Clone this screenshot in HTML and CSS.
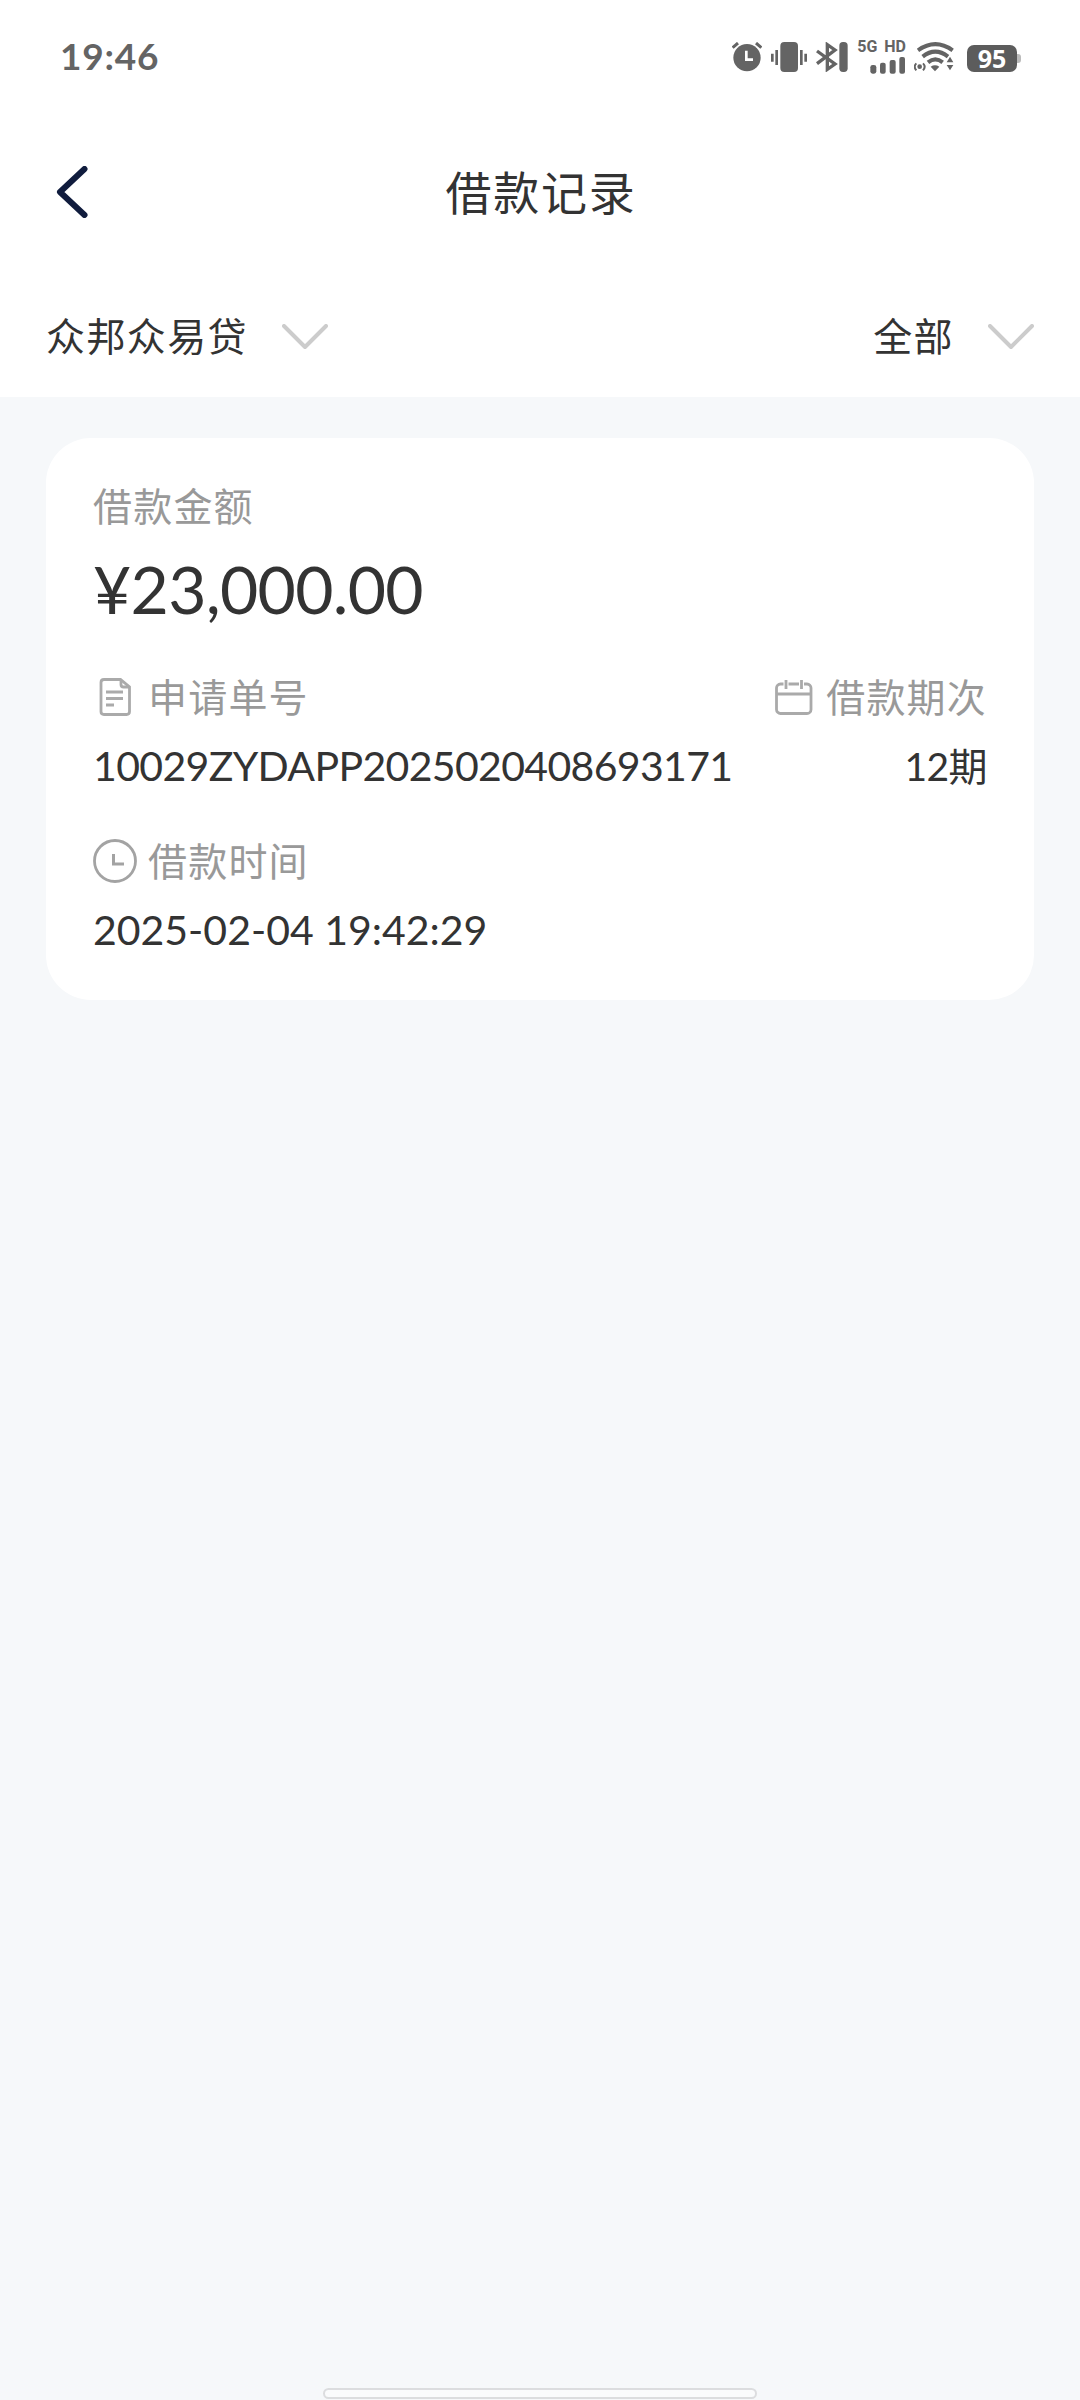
FILE: index.html
```html
<!DOCTYPE html>
<html lang="zh-CN">
<head>
  <meta charset="UTF-8" />
  <title>借款记录</title>
  <link rel="stylesheet" href="styles.css">
</head>
<body>

<header class="top">
  <div class="status">
    <span class="time">19:46</span>
    <div class="status-icons">
      <!-- Alarm -->
      <svg class="alarm" width="30" height="30" viewBox="0 0 90 90">
        <circle cx="45" cy="47" r="41" fill="#646464" />
        <path d="M2 17 18 3M88 17 72 3" stroke="#646464" stroke-width="9" />
        <path d="M43 26v27h20" fill="none" stroke="#fff" stroke-width="8" />
      </svg>
      <!-- Vibrate -->
      <svg class="vibrate" width="36" height="30" viewBox="0 0 108 90">
        <rect x="28" y="0" width="53" height="90" rx="12" fill="#646464" />
        <path d="M4 35v24M17 24v45M91 24v45M104 35v24" stroke="#646464" stroke-width="8" />
      </svg>
      <!-- Bluetooth -->
      <svg class="bluetooth" width="32" height="30" viewBox="0 0 96 90">
        <path d="M3 27 57 66 34 82V8L57 24 3 65" fill="none" stroke="#646464" stroke-width="10" />
        <rect x="70" y="0" width="25" height="90" rx="11" fill="#646464" />
      </svg>
      <div class="signal">
        <span>5G HD</span>
        <svg width="36" height="17" viewBox="0 0 108 51">
          <g fill="#646464">
            <rect x="1" y="24" width="18" height="26" rx="7" />
            <rect x="30" y="17" width="17" height="33" rx="6" />
            <rect x="59" y="9" width="18" height="41" rx="6" />
            <rect x="88" y="0" width="17" height="50" rx="6" />
          </g>
        </svg>
      </div>
      <!-- Wifi -->
      <svg class="wifi" width="40" height="30" viewBox="0 0 120 90">
        <g fill="none" stroke="#646464" stroke-width="12">
          <path d="M12 25Q64-12 116 25" />
          <path d="M26 44Q64 14 102 44" />
          <path d="M42 61Q64 43 86 61" />
        </g>
        <path d="M50 74Q63 66 76 74L63 88zM98 61 108 44 118 61zM98 69h20L108 85z" fill="#646464" />
        <circle cx="17" cy="74" r="7" fill="#646464" />
        <path d="M7 64Q-3 74 7 85M27 64Q37 74 27 85" fill="none" stroke="#646464" stroke-width="6" />
      </svg>
      <div class="battery">95</div>
    </div>
  </div>

  <div class="nav">
    <svg class="back" width="32" height="52" viewBox="0 0 32 52">
      <path d="M28.500 3 4 26 28.500 49" fill="none" stroke="#101c3d" stroke-width="6" stroke-linecap="round" stroke-linejoin="round" />
    </svg>
    <h1>借款记录</h1>
  </div>

  <div class="filters">
    <div class="filter">
      <span>众邦众易贷</span>
      <svg width="46" height="26" viewBox="0 0 46 26">
        <path d="M2 2 23 23 44 2" fill="none" stroke="#ccc" stroke-width="4" stroke-linecap="round" stroke-linejoin="round" />
      </svg>
    </div>
    <div class="filter">
      <span>全部</span>
      <svg width="46" height="26" viewBox="0 0 46 26">
        <path d="M2 2 23 23 44 2" fill="none" stroke="#ccc" stroke-width="4" stroke-linecap="round" stroke-linejoin="round" />
      </svg>
    </div>
  </div>
</header>

<main>
  <section class="card">
    <div class="label"><span>借款金额</span></div>
    <div class="amount">¥23,000.00</div>
    <div class="row">
      <div class="item">
        <div class="label">
          <svg width="44" height="44" viewBox="0 0 44 44">
            <g fill="none" stroke="#aaa" stroke-width="2.800">
              <path d="M27.500 4.500H11q-3 0-3 3v29q0 3 3 3h22.500q3 0 3-3V12z" />
              <path d="M28 5v4.500q0 2.500 2.500 2.500H36M13 17h17M13 23.500h17M13 30h8" />
            </g>
          </svg>
          <span>申请单号</span>
        </div>
        <div class="value order">10029ZYDAPP2025020408693171</div>
      </div>
      <div class="item right">
        <div class="label">
          <svg width="44" height="44" viewBox="0 0 44 44">
            <g fill="none" stroke="#aaa" stroke-width="2.800">
              <rect x="5.500" y="9" width="34.500" height="29.500" rx="4" />
              <path d="M5.500 19H40" />
              <path d="M15 5v9M30.500 5v9" stroke="#fff" stroke-width="5" />
              <path d="M15 5v9M30.500 5v9" />
            </g>
          </svg>
          <span>借款期次</span>
        </div>
        <div class="value">12期</div>
      </div>
    </div>
    <div class="item">
      <div class="label">
        <svg width="44" height="44" viewBox="0 0 44 44">
          <circle cx="22" cy="22" r="20.500" fill="none" stroke="#a3a3a3" stroke-width="2.800" />
          <path d="M20.500 15v10H31" fill="none" stroke="#a3a3a3" stroke-width="3" />
        </svg>
        <span>借款时间</span>
      </div>
      <div class="value date">2025-02-04 19:42:29</div>
    </div>
  </section>
</main>

<div class="home-bar"></div>

</body>
</html>
```
FILE: styles.css
```css
* {
  box-sizing: border-box;
}

body {
  margin: 0;
  height: 2400px;
  display: flex;
  flex-direction: column;
  background: #f6f8fa;
  color: #333;
  font-family: Lato, "Noto Sans CJK SC", sans-serif;
}

svg {
  display: block;
  flex: none;
}

.top {
  height: 397px;
  background: #fff;
}

.status {
  height: 114px;
  padding: 0 60px;
  display: flex;
  justify-content: space-between;
  align-items: center;
}

.time {
  padding-bottom: 3px;
  color: #646464;
  font-size: 37px;
  font-weight: bold;
  letter-spacing: 0.8px;
}

.status-icons {
  display: flex;
  align-items: center;
  color: #646464;
}

.vibrate {
  margin-left: 9px;
}

.bluetooth {
  margin-left: 9px;
}

.signal {
  width: 50px;
  height: 34px;
  margin-left: 8px;
  display: flex;
  flex-direction: column;
  justify-content: space-between;
  align-items: flex-end;
  font: bold 16px/14px Roboto, sans-serif;
  word-spacing: 3px;
  white-space: nowrap;
}

.wifi {
  margin-left: 8px;
}

.battery {
  position: relative;
  width: 50px;
  height: 27px;
  margin: 2px 3px 0 13px;
  border-radius: 7px;
  background: #5c5c5c;
  color: #fff;
  font: bold 25px/27px "Open Sans", sans-serif;
  text-align: center;
}

.battery::after {
  content: "";
  position: absolute;
  left: 50px;
  top: 9px;
  width: 4px;
  height: 9px;
  border-radius: 0 3px 3px 0;
  background: #bbb;
}

.nav {
  height: 156px;
  padding: 0 56px;
  display: grid;
  grid-template-columns: 32px 1fr 32px;
  align-items: center;
}

h1 {
  margin: 0;
  padding: 2px 0 0 2px;
  font-size: 46px;
  font-weight: normal;
  line-height: 60px;
  letter-spacing: 1.8px;
  text-align: center;
}

.filters {
  height: 127px;
  padding: 0 46px;
  display: flex;
  justify-content: space-between;
}

.filter {
  height: 134px;
  display: flex;
  align-items: center;
  gap: 34px;
  font-size: 39px;
  letter-spacing: 1.4px;
}

.filter span {
  padding-bottom: 6px;
}

main {
  flex: 1;
  padding: 41px 46px;
}

.card {
  height: 562px;
  padding: 40px 47px;
  border-radius: 45px;
  background: #fff;
}

.label {
  height: 56px;
  display: flex;
  align-items: center;
  gap: 11px;
  color: #999;
  font-size: 39px;
  letter-spacing: 1.2px;
}

.label span {
  padding-bottom: 5px;
}

.amount {
  height: 78px;
  margin: 16px 0 41px;
  font-size: 66px;
  line-height: 78px;
  letter-spacing: -0.7px;
}

.row {
  display: flex;
  justify-content: space-between;
}

.item {
  height: 164px;
}

.value {
  margin-top: 11px;
  font-size: 41px;
  line-height: 60px;
}

.order {
  letter-spacing: -0.65px;
}

.right .value {
  font-size: 39px;
  letter-spacing: -0.6px;
  text-align: right;
}

.home-bar {
  width: 434px;
  height: 11px;
  margin: 0 auto 1px;
  border: 2px solid #dcdddf;
  border-radius: 6px;
  background: #fafbfc;
}
```
